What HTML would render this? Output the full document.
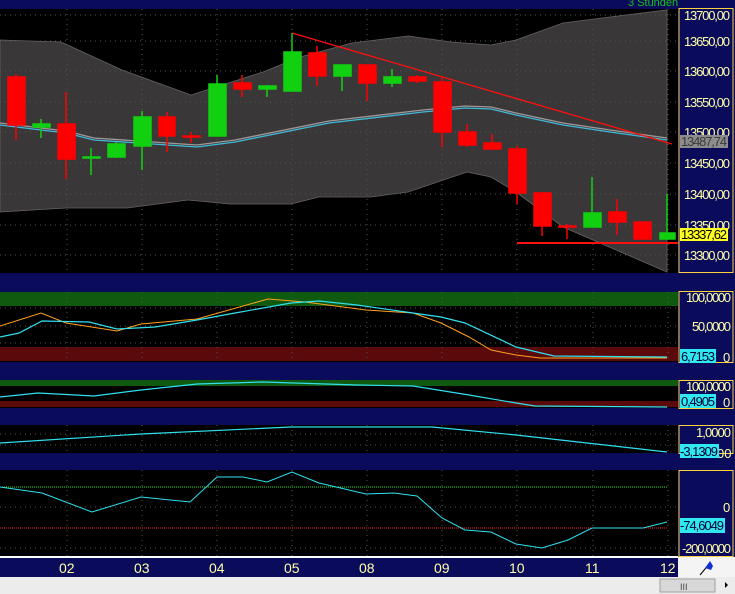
<!DOCTYPE html>
<html><head><meta charset="utf-8"><style>
html,body{margin:0;padding:0;background:#0a0a5a;}
svg{display:block;font-family:"Liberation Sans",sans-serif;}
.ax{fill:#ffffa8;font-size:13px;}
</style></head><body>
<svg width="735" height="594" viewBox="0 0 735 594" xmlns="http://www.w3.org/2000/svg">
<rect x="0" y="0" width="735" height="594" fill="#0b0b5c"/>
<text x="628" y="6" fill="#18c018" font-size="11">3 Stunden</text>
<rect x="0" y="9" width="678" height="264" fill="#000"/>
<polygon fill="#393737" stroke="#6a6262" stroke-width="0.8" points="0,40 61,42 122,70 191,95 263,72 300,57 352,43 408,36 451,42 491,45 516,40 563,23 610,17 667,10 667,272 563,227 516,192 491,177 467,172 408,192 371,197 319,197 291,204 230,204 188,200 127,208 66,208 0,212"/>
<g stroke="#4a5a4a" stroke-dasharray="1,4" stroke-width="1">
<line x1="0" y1="15" x2="677" y2="15"/><line x1="0" y1="41" x2="677" y2="41"/><line x1="0" y1="71" x2="677" y2="71"/><line x1="0" y1="102" x2="677" y2="102"/><line x1="0" y1="132" x2="677" y2="132"/><line x1="0" y1="163" x2="677" y2="163"/><line x1="0" y1="194" x2="677" y2="194"/><line x1="0" y1="225" x2="677" y2="225"/><line x1="0" y1="255" x2="677" y2="255"/>
<line x1="67" y1="9" x2="67" y2="273"/><line x1="142" y1="9" x2="142" y2="273"/><line x1="217" y1="9" x2="217" y2="273"/><line x1="292" y1="9" x2="292" y2="273"/><line x1="367" y1="9" x2="367" y2="273"/><line x1="442" y1="9" x2="442" y2="273"/><line x1="517" y1="9" x2="517" y2="273"/><line x1="593" y1="9" x2="593" y2="273"/><line x1="668" y1="9" x2="668" y2="273"/>
</g>
<polyline fill="none" stroke="#a09898" stroke-width="1.3" points="0,123 66,131 94,138 197,145 235,140 329,121 423,110 465,106 491,107 516,113 563,123 610,130 667,138"/>
<polyline fill="none" stroke="#40b8d8" stroke-width="1.3" points="0,125 66,133 94,140 197,147 235,142 329,123 423,112 465,108 491,109 516,115 563,125 610,132 667,140"/>
<line x1="292" y1="33" x2="672" y2="144" stroke="#ff1010" stroke-width="1.3"/>
<line x1="517" y1="243" x2="678" y2="243" stroke="#ff1010" stroke-width="2"/>
<g stroke-width="1.5">
<g fill="#ff0000" stroke="#ff0000">
<line x1="16" y1="74" x2="16" y2="140"/><rect x="8" y="77" width="17" height="48"/>
<line x1="66" y1="92" x2="66" y2="179"/><rect x="58" y="124" width="17" height="35"/>
<line x1="167" y1="112" x2="167" y2="152"/><rect x="159" y="117" width="16" height="19"/>
<line x1="191" y1="132" x2="191" y2="143"/><rect x="183" y="136" width="17" height="1"/>
<line x1="242" y1="75" x2="242" y2="97"/><rect x="234" y="83" width="17" height="6"/>
<line x1="317" y1="46" x2="317" y2="86"/><rect x="309" y="53" width="17" height="23"/>
<line x1="367" y1="65" x2="367" y2="101"/><rect x="359" y="65" width="17" height="18"/>
<line x1="417" y1="75" x2="417" y2="83"/><rect x="409" y="77" width="17" height="4"/>
<line x1="442" y1="76" x2="442" y2="147"/><rect x="434" y="82" width="17" height="50"/>
<line x1="467" y1="124" x2="467" y2="147"/><rect x="459" y="132" width="17" height="13"/>
<line x1="492" y1="134" x2="492" y2="149"/><rect x="484" y="143" width="17" height="6"/>
<line x1="517" y1="146" x2="517" y2="204"/><rect x="509" y="149" width="17" height="44"/>
<line x1="542" y1="192" x2="542" y2="236"/><rect x="534" y="193" width="17" height="33"/>
<line x1="567" y1="224" x2="567" y2="239"/><rect x="559" y="226" width="17" height="1"/>
<line x1="617" y1="199" x2="617" y2="235"/><rect x="609" y="212" width="17" height="10"/>
<rect x="634" y="222" width="17" height="17"/>
</g>
<g fill="#10d010" stroke="#10d010">
<line x1="41" y1="119" x2="41" y2="138"/><rect x="33" y="124" width="17" height="3"/>
<line x1="91" y1="148" x2="91" y2="175"/><rect x="83" y="157" width="17" height="1"/>
<line x1="116" y1="142" x2="116" y2="158"/><rect x="108" y="144" width="17" height="13"/>
<line x1="142" y1="111" x2="142" y2="170"/><rect x="134" y="117" width="17" height="29"/>
<line x1="217" y1="75" x2="217" y2="136"/><rect x="209" y="84" width="17" height="52"/>
<line x1="267" y1="85" x2="267" y2="97"/><rect x="259" y="86" width="17" height="3"/>
<line x1="292" y1="33" x2="292" y2="91"/><rect x="284" y="52" width="17" height="39"/>
<line x1="342" y1="65" x2="342" y2="91"/><rect x="334" y="65" width="17" height="11"/>
<line x1="392" y1="69" x2="392" y2="87"/><rect x="384" y="77" width="17" height="6"/>
<line x1="592" y1="177" x2="592" y2="227"/><rect x="584" y="213" width="17" height="14"/>
<line x1="667" y1="194" x2="667" y2="239"/><rect x="660" y="233" width="15" height="6"/>
</g>
</g>
<rect x="679" y="8.5" width="54" height="264" fill="#0b0b5c" stroke="#ffd040" stroke-width="1"/>
<g class="ax">
<text x="684" y="20" textLength="46">13700,00</text>
<text x="684" y="46" textLength="46">13650,00</text>
<text x="684" y="76" textLength="46">13600,00</text>
<text x="684" y="107" textLength="46">13550,00</text>
<text x="684" y="137" textLength="46">13500,00</text>
<text x="684" y="168" textLength="46">13450,00</text>
<text x="684" y="199" textLength="46">13400,00</text>
<text x="684" y="230" textLength="46">13350,00</text>
<text x="684" y="260" textLength="46">13300,00</text>
</g>
<rect x="680" y="135" width="48" height="13" fill="#8c8c8c"/>
<text x="681" y="146" fill="#3a3a3a" font-size="13" textLength="46">13487,74</text>
<rect x="680" y="228" width="48" height="13" fill="#ffff20"/>
<text x="681" y="239" fill="#000" font-size="13" textLength="46">13337,62</text>

<rect x="0" y="292" width="678" height="70" fill="#000"/>
<rect x="0" y="292" width="678" height="14" fill="#105a10"/>
<rect x="0" y="347" width="678" height="14" fill="#5a0a0a"/>
<g stroke="#4a5a4a" stroke-dasharray="1,4"><line x1="0" y1="326" x2="677" y2="326"/><line x1="0" y1="343" x2="677" y2="343"/><line x1="0" y1="308" x2="677" y2="308"/>
<line x1="67" y1="292" x2="67" y2="362"/><line x1="142" y1="292" x2="142" y2="362"/><line x1="217" y1="292" x2="217" y2="362"/><line x1="292" y1="292" x2="292" y2="362"/><line x1="367" y1="292" x2="367" y2="362"/><line x1="442" y1="292" x2="442" y2="362"/><line x1="517" y1="292" x2="517" y2="362"/><line x1="593" y1="292" x2="593" y2="362"/><line x1="668" y1="292" x2="668" y2="362"/></g>
<polyline fill="none" stroke="#ffa020" stroke-width="1" points="0,326 41,313 66,323 117,331 141,324 197,319 268,299 305,302 366,310 413,313 441,323 469,337 491,350 516,355 540,358 667,358"/>
<polyline fill="none" stroke="#30e0f0" stroke-width="1.2" points="0,337 19,333 42,321 89,322 117,329 155,327 197,320 235,313 291,303 319,301 357,305 413,313 441,317 465,323 516,347 554,356 667,357"/>
<rect x="679" y="291.5" width="54" height="71" fill="#0b0b5c" stroke="#ffd040"/>
<g class="ax"><text x="686" y="302" textLength="45">100,0000</text><text x="692" y="331" textLength="39">50,0000</text><text x="723" y="362">0</text></g>
<rect x="680" y="349" width="36" height="14" fill="#30e8f0"/><text x="681" y="361" font-size="13" fill="#003" textLength="34">6,7153</text>

<rect x="0" y="380" width="678" height="28" fill="#000"/>
<rect x="0" y="380" width="678" height="6" fill="#105a10"/>
<rect x="0" y="401" width="678" height="6" fill="#5a0a0a"/>
<polyline fill="none" stroke="#30e0f0" stroke-width="1.2" points="0,397 38,393 94,396 141,390 197,384 263,382 357,385 413,386 469,395 516,403 535,406 667,407"/>
<rect x="679" y="380.5" width="54" height="28" fill="#0b0b5c" stroke="#ffd040"/>
<g class="ax"><text x="686" y="391" textLength="45">100,0000</text><text x="723" y="407">0</text></g>
<rect x="680" y="394" width="36" height="14" fill="#30e8f0"/><text x="681" y="406" font-size="13" fill="#003" textLength="34">0,4905</text>

<rect x="0" y="425" width="678" height="28" fill="#000"/>
<g stroke="#4a5a4a" stroke-dasharray="1,4"><line x1="0" y1="434" x2="677" y2="434"/><line x1="0" y1="445" x2="677" y2="445"/>
<line x1="67" y1="425" x2="67" y2="453"/><line x1="142" y1="425" x2="142" y2="453"/><line x1="217" y1="425" x2="217" y2="453"/><line x1="292" y1="425" x2="292" y2="453"/><line x1="367" y1="425" x2="367" y2="453"/><line x1="442" y1="425" x2="442" y2="453"/><line x1="517" y1="425" x2="517" y2="453"/><line x1="593" y1="425" x2="593" y2="453"/><line x1="668" y1="425" x2="668" y2="453"/></g>
<polyline fill="none" stroke="#30e0f0" stroke-width="1.2" points="0,443 141,434 291,427 432,427 516,435 667,452"/>
<rect x="679" y="425.5" width="54" height="28" fill="#0b0b5c" stroke="#ffd040"/>
<g class="ax"><text x="696" y="437" textLength="35">1,0000</text><text x="717" y="458">00</text></g>
<rect x="680" y="444" width="39" height="14" fill="#30e8f0"/><text x="680" y="456" font-size="13" fill="#003" textLength="38">-3,1309</text>

<rect x="0" y="470" width="678" height="86" fill="#000"/>
<g stroke="#4a5a4a" stroke-dasharray="1,4"><line x1="0" y1="507" x2="677" y2="507"/><line x1="0" y1="548" x2="677" y2="548"/>
<line x1="67" y1="470" x2="67" y2="556"/><line x1="142" y1="470" x2="142" y2="556"/><line x1="217" y1="470" x2="217" y2="556"/><line x1="292" y1="470" x2="292" y2="556"/><line x1="367" y1="470" x2="367" y2="556"/><line x1="442" y1="470" x2="442" y2="556"/><line x1="517" y1="470" x2="517" y2="556"/><line x1="593" y1="470" x2="593" y2="556"/><line x1="668" y1="470" x2="668" y2="556"/></g>
<line x1="0" y1="487" x2="668" y2="487" stroke="#20e020" stroke-dasharray="1,1"/>
<line x1="0" y1="528" x2="668" y2="528" stroke="#ff2020" stroke-dasharray="1,1"/>
<polyline fill="none" stroke="#30e0f0" stroke-width="1" points="0,487 42,493 92,512 141,497 190,502 217,477 243,477 267,482 292,472 319,483 366,494 394,493 417,496 442,518 465,530 491,532 516,544 542,548 568,540 592,528 643,528 667,522"/>
<rect x="679" y="470.5" width="54" height="86" fill="#0b0b5c" stroke="#ffd040"/>
<g class="ax"><text x="723" y="512">0</text><text x="682" y="553" textLength="49">-200,0000</text></g>
<rect x="680" y="518" width="45" height="15" fill="#30e8f0"/><text x="680" y="530" font-size="13" fill="#003" textLength="44">-74,6049</text>

<rect x="0" y="556" width="678" height="2" fill="#fff"/>
<rect x="0" y="558" width="678" height="18" fill="#0b0b5c"/>
<g fill="#ffffa8" font-size="14">
<text x="59" y="573">02</text><text x="134" y="573">03</text><text x="209" y="573">04</text><text x="284" y="573">05</text><text x="359" y="573">08</text><text x="434" y="573">09</text><text x="509" y="573">10</text><text x="585" y="573">11</text><text x="660" y="573">12</text>
</g>
<rect x="678" y="557" width="57" height="20" fill="#f4f4f4"/>
<line x1="700" y1="575" x2="710" y2="563" stroke="#000"/>
<polygon points="705,568 710,561 713,566 711,570" fill="#1030d0"/>
<rect x="0" y="577" width="735" height="17" fill="#ececec"/>
<rect x="660" y="579" width="55" height="13" fill="#d8d8d8" stroke="#a0a0a0"/>
<text x="680" y="590" font-size="9" fill="#444">III</text>
<polygon points="725,582 728,585 725,588" fill="#000"/>
</svg>
</body></html>
